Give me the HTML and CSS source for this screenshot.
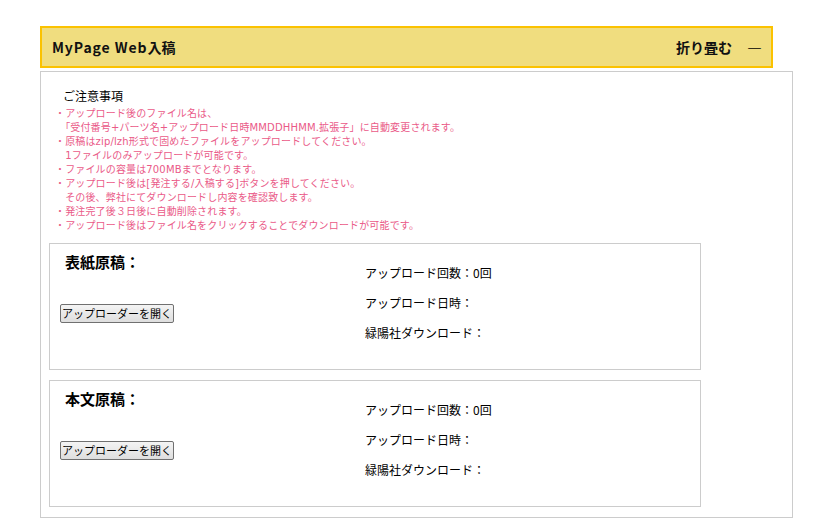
FILE: index.html
```html
<!DOCTYPE html>
<html lang="ja">
<head>
<meta charset="utf-8">
<title>MyPage Web入稿</title>
<link rel="stylesheet" href="styles.css">
</head>
<body>
<div class="page">
  <div class="header">
    <div class="header-title"><span class="latin">MyPage Web</span>入稿</div>
    <div class="header-toggle"><span>折り畳む</span><span class="dash">―</span></div>
  </div>
  <div class="content">
    <div class="notice-title">ご注意事項</div>
    <div class="notes">
      <div>・アップロード後のファイル名は、<br>　「受付番号+パーツ名+アップロード日時MMDDHHMM.拡張子」に自動変更されます。</div>
      <div>・原稿はzip/lzh形式で固めたファイルをアップロードしてください。<br>　1ファイルのみアップロードが可能です。</div>
      <div>・ファイルの容量は700MBまでとなります。</div>
      <div>・アップロード後は[発注する/入稿する]ボタンを押してください。<br>　その後、弊社にてダウンロードし内容を確認致します。</div>
      <div>・発注完了後３日後に自動削除されます。</div>
      <div>・アップロード後はファイル名をクリックすることでダウンロードが可能です。</div>
    </div>
    <div class="card">
      <div class="card-left">
        <div class="card-title">表紙原稿：</div>
        <button class="upload-btn" type="button">アップローダーを開く</button>
      </div>
      <div class="card-right">
        <div>アップロード回数：0回</div>
        <div>アップロード日時：</div>
        <div>緑陽社ダウンロード：</div>
      </div>
    </div>
    <div class="card">
      <div class="card-left">
        <div class="card-title">本文原稿：</div>
        <button class="upload-btn" type="button">アップローダーを開く</button>
      </div>
      <div class="card-right">
        <div>アップロード回数：0回</div>
        <div>アップロード日時：</div>
        <div>緑陽社ダウンロード：</div>
      </div>
    </div>
  </div>
</div>
</body>
</html>
```

FILE: styles.css
```css
html, body {
  margin: 0;
  padding: 0;
  background: #ffffff;
}
body {
  font-family: "Noto Sans CJK JP", "Noto Sans", sans-serif;
  color: #000;
}
.page {
  padding: 26px 0 0 40px;
}
.header {
  width: 733px;
  height: 42px;
  box-sizing: border-box;
  background: #f0dd7f;
  border: 2px solid #fbc200;
  display: flex;
  align-items: center;
  justify-content: space-between;
  padding: 0 9px 0 10px;
  font-weight: bold;
  font-size: 14px;
  color: #111;
}
.header-title .latin {
  letter-spacing: 0.9px;
}
.header-toggle {
  display: flex;
  align-items: center;
  gap: 15px;
}
.dash {
  font-weight: bold;
  font-family: "Noto Sans CJK JP", sans-serif;
  font-size: 15px;
  color: #000;
}
.content {
  margin-top: 3px;
  width: 753px;
  box-sizing: border-box;
  border: 1px solid #cccccc;
  padding: 15px 0 10px 8px;
}
.notice-title {
  font-size: 12px;
  line-height: 18px;
  margin-left: 14px;
}
.notes {
  margin-top: 2px;
  margin-left: 6px;
  font-family: "DejaVu Sans", "Noto Sans CJK JP", sans-serif;
  font-size: 10px;
  line-height: 14px;
  letter-spacing: 0.15px;
  color: #ea5a88;
}
.card {
  margin-top: 10px;
  width: 652px;
  box-sizing: border-box;
  border: 1px solid #cccccc;
  display: grid;
  grid-template-columns: 315px 1fr;
}
.card-left {
  padding: 8px 0 0 10px;
}
.card-title {
  font-size: 15px;
  font-weight: bold;
  line-height: 20px;
  margin-left: 5px;
}
.upload-btn {
  margin-top: 32px;
  display: block;
  height: 19px;
  padding: 0 1px;
  font-family: "Noto Sans CJK JP", sans-serif;
  font-size: 11px;
  line-height: 15px;
  color: #000;
  background: linear-gradient(#f4f4f4, #dedede);
  border: 1px solid #707070;
  border-radius: 2px;
}
.card-right {
  padding: 14px 0 21px 0;
  font-size: 12px;
  line-height: 30px;
}
```
